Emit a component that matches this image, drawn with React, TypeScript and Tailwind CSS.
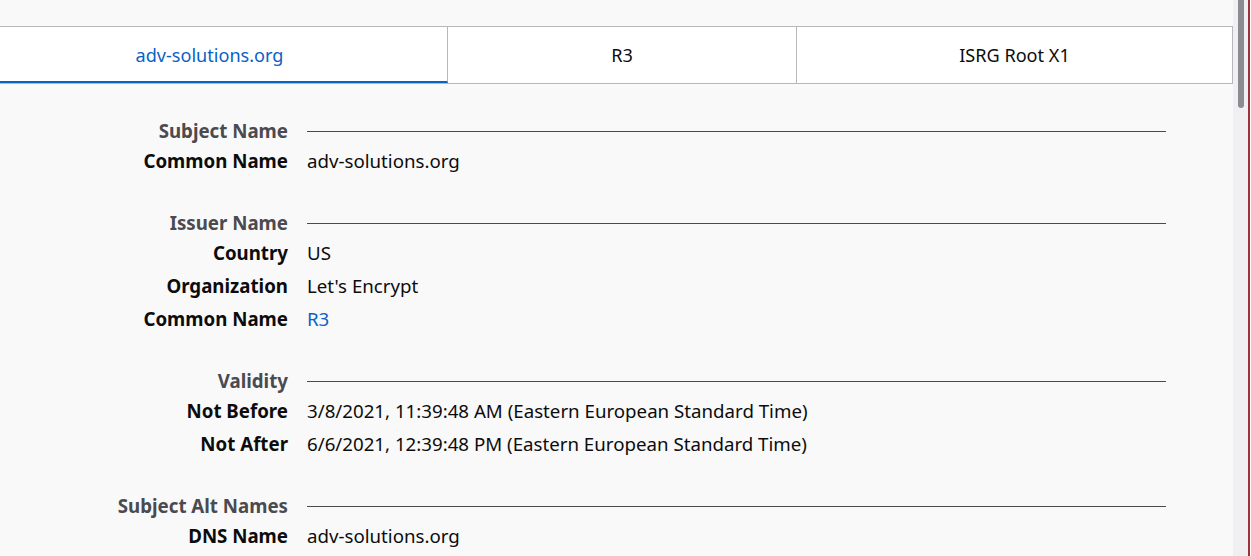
import React from "react";

type Row = { label: string; value: string; link?: boolean };
type Section = { title: string; rows: Row[] };

const sections: Section[] = [
  { title: "Subject Name", rows: [{ label: "Common Name", value: "adv-solutions.org" }] },
  {
    title: "Issuer Name",
    rows: [
      { label: "Country", value: "US" },
      { label: "Organization", value: "Let's Encrypt" },
      { label: "Common Name", value: "R3", link: true },
    ],
  },
  {
    title: "Validity",
    rows: [
      { label: "Not Before", value: "3/8/2021, 11:39:48 AM (Eastern European Standard Time)" },
      { label: "Not After", value: "6/6/2021, 12:39:48 PM (Eastern European Standard Time)" },
    ],
  },
  { title: "Subject Alt Names", rows: [{ label: "DNS Name", value: "adv-solutions.org" }] },
];

const tabs = [
  { name: "adv-solutions.org", width: "w-[448px] pr-[28px]", active: true },
  { name: "R3", width: "w-[349px]", active: false },
  { name: "ISRG Root X1", width: "flex-1", active: false },
];

export default function App() {
  return (
    <div
      className="flex h-[556px] w-[1251px] overflow-hidden bg-[#f9f9fa] text-[#0c0c0d]"
      style={{ fontFamily: '"Noto Sans", "Open Sans", sans-serif' }}
    >
      <div className="flex w-[1233px] flex-col">
        {/* Certificate tabs */}
        <div className="mt-[26px] flex h-[58px] border-y border-[#b8b8bb]">
          {tabs.map((tab) => (
            <div
              key={tab.name}
              className={`flex items-center justify-center border-r border-[#b8b8bb] bg-white text-[18.1px] ${tab.width} ${
                tab.active ? "border-b-2 border-b-[#0a62c6] text-[#0a62c6]" : ""
              }`}
            >
              <span className={tab.active ? "mt-[3px]" : "mt-[1px]"}>{tab.name}</span>
            </div>
          ))}
        </div>

        {/* Certificate fields */}
        <div className="flex flex-col gap-[32px] pt-[34px] pr-[67px] text-[18.7px]">
          {sections.map((section) => (
            <div key={section.title} className="flex flex-col">
              <div className="flex h-[27px] items-center">
                <div className="w-[288px] text-right font-bold text-[#4a4a4f]">{section.title}</div>
                <div className="ml-[19px] h-px flex-1 bg-[#4a4a4f]" />
              </div>
              {section.rows.map((row) => (
                <div key={row.label + row.value} className="flex h-[33px] items-center">
                  <div className="w-[288px] text-right font-bold">{row.label}</div>
                  <div className={`ml-[19px] ${row.link ? "text-[#0a62c6]" : ""}`}>{row.value}</div>
                </div>
              ))}
            </div>
          ))}
        </div>
      </div>

      {/* Scrollbar */}
      <div className="relative w-[15px] bg-[#f0f0f3]">
        <div className="absolute left-[5px] top-0 h-[108px] w-[6px] rounded-b-full bg-[#8c8c90]" />
      </div>
      <div className="w-[2px] bg-[#a0303a]" />
      <div className="flex-1 bg-white" />
    </div>
  );
}
